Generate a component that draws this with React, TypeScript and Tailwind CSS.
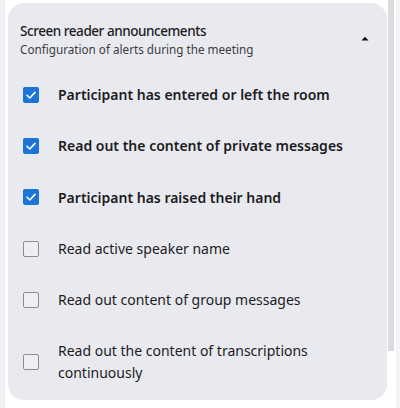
import React from "react";

const items = [
  { label: "Participant has entered or left the room", checked: true },
  { label: "Read out the content of private messages", checked: true },
  { label: "Participant has raised their hand", checked: true },
  { label: "Read active speaker name", checked: false },
  { label: "Read out content of group messages", checked: false },
  { label: "Read out the content of transcriptions continuously", checked: false },
];

function Box({ checked }: { checked: boolean }) {
  if (checked) {
    return (
      <div className="w-[16px] h-[16px] rounded-[2px] bg-[#1b74d6] flex items-center justify-center shrink-0">
        <svg width="12" height="12" viewBox="0 0 12 12" fill="none">
          <path d="M2 6.2 L4.8 9 L10 3.4" stroke="white" strokeWidth="1.6" strokeLinecap="round" strokeLinejoin="round" />
        </svg>
      </div>
    );
  }
  return <div className="w-[16px] h-[16px] rounded-[2px] border-[1.5px] border-[#8d8d90] bg-[#eeeff2] shrink-0" />;
}

export default function App() {
  return (
    <div
      className="relative w-[400px] h-[408px] bg-white overflow-hidden flex"
      style={{ fontFamily: '"Noto Sans", "Open Sans", sans-serif' }}
    >
      <div className="w-[5px] h-full bg-[#f2f2f4] shrink-0" />
      <div className="ml-[3px] mt-[3px] w-[379px] h-[397px] rounded-[16px] bg-[#e9eaef] shrink-0 flex flex-col pt-[18px]">
        <div className="flex items-start pl-[12px] pr-[18px]">
          <div className="flex-1">
            <div className="text-[13.5px] leading-[20px] font-medium tracking-[-0.45px] text-[#1c1c1e]">
              Screen reader announcements
            </div>
            <div className="text-[11.7px] leading-[17px] text-[#3c3c40]">Configuration of alerts during the meeting</div>
          </div>
          <svg width="8" height="5" viewBox="0 0 8 5" className="mt-[15px]">
            <path d="M0.5 4.5 L4 0.8 L7.5 4.5 Z" fill="#111" />
          </svg>
        </div>
        <div className="mt-[11px] flex flex-col">
          {items.map((it) => (
            <div key={it.label} className="py-[15px] flex items-center pl-[15px] pr-[20px]">
              <Box checked={it.checked} />
              <div
                className={
                  "ml-[19px] text-[14px] leading-[21.3px] text-[#1c1c1e] " +
                  (it.checked ? "font-semibold" : "font-normal")
                }
              >
                {it.label}
              </div>
            </div>
          ))}
        </div>
      </div>
      <div className="ml-[1px] w-[6px] h-[351px] bg-[#dcdcdf] shrink-0" />
      <div className="ml-[2px] w-[5px] h-full bg-[#f4f4f6] shrink-0" />
    </div>
  );
}
